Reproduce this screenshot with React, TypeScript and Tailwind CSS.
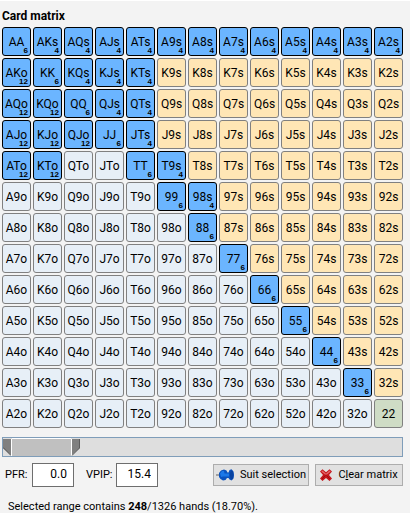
import { useState } from "react";

const RANKS = "AKQJT98765432";

const SELECTED = new Set(
  (
    "AA AKs AQs AJs ATs A9s A8s A7s A6s A5s A4s A3s A2s " +
    "AKo KK KQs KJs KTs AQo KQo QQ QJs QTs AJo KJo QJo JJ JTs " +
    "ATo KTo TT T9s 99 98s 88 77 66 55 44 33"
  ).split(" "),
);

type Kind = "pair" | "suited" | "offsuit";
type Hand = { name: string; kind: Kind };

const COMBOS: Record<Kind, number> = { pair: 6, suited: 4, offsuit: 12 };
const FILL: Record<Kind, string> = {
  pair: "border-[#808080] bg-[#cfdcc5]",
  suited: "border-[#808080] bg-[#ffe6b5]",
  offsuit: "border-[#808080] bg-[#e7eff7]",
};

const HANDS: Hand[] = [];
for (let r = 0; r < 13; r++) {
  for (let c = 0; c < 13; c++) {
    if (r === c) HANDS.push({ name: RANKS[r] + RANKS[r], kind: "pair" });
    else if (c > r) HANDS.push({ name: RANKS[r] + RANKS[c] + "s", kind: "suited" });
    else HANDS.push({ name: RANKS[c] + RANKS[r] + "o", kind: "offsuit" });
  }
}

function Cell({ hand, on, toggle }: { hand: Hand; on: boolean; toggle: () => void }) {
  return (
    <button
      type="button"
      aria-pressed={on}
      onClick={toggle}
      className={`relative flex aspect-square items-center justify-center rounded-[3px] border text-[12px] leading-[10px] ${
        on ? "border-black bg-[#6bb5ff]" : FILL[hand.kind]
      }`}
    >
      {hand.name}
      {on && (
        <span className="absolute right-0.5 bottom-0 font-['Liberation_Sans',sans-serif] text-[8px] leading-[8px] font-bold">
          {COMBOS[hand.kind]}
        </span>
      )}
    </button>
  );
}

function RangeBar() {
  return (
    <div className="relative mt-[9px] h-5 border border-[#7f9db9] bg-[#dedede]">
      <div className="flex h-full w-[77px] bg-[#c0c0c0]">
        <svg className="h-full w-[9px]" viewBox="0 0 9 18" aria-hidden="true">
          <rect width="9" height="18" fill="#dedede" />
          <path d="M0 1H8V17L0 10Z" fill="#808080" />
          <path d="M0 9.500L8 17.500" stroke="#4c4c4c" />
          <path d="M8.500 1V18" stroke="#fff" />
        </svg>
        <div className="flex-1 border-t border-white" />
        <svg className="h-full w-[9px]" viewBox="0 0 9 18" aria-hidden="true">
          <rect width="9" height="18" fill="#dedede" />
          <path d="M1 1H9V10L1 17Z" fill="#808080" />
          <path d="M0.500 1V18" stroke="#fff" />
          <path d="M8.500 1V10L1 17.500" fill="none" stroke="#5c5c5c" />
        </svg>
      </div>
      <input type="range" aria-label="Range start" defaultValue={0} className="absolute inset-0 h-full w-full opacity-0" />
      <input type="range" aria-label="Range end" defaultValue={19} className="absolute inset-0 h-full w-full opacity-0" />
    </div>
  );
}

function PinIcon() {
  return (
    <svg className="h-3 w-[18px]" viewBox="0 0 18 12" aria-hidden="true">
      <path d="M0 6H4" stroke="#777" strokeWidth="1.2" />
      <path d="M3 4L5 1.500L8 .5L10.500 1.500L11.500 3.500H12.500L13.500 1L15.500 .3L17.500 2.500L18 6L17.500 9.500L15.500 11.500L13.500 10.500L12.500 9H11L9.500 11L7 11.500L4.500 10L3 8Z" fill="#0b52bd" />
      <path d="M4 4.500L6 2L8 2L8.500 4.500H13V7.500H7L5 8Z" fill="#1c78e8" />
      <ellipse cx="15.700" cy="6" rx="1.700" ry="4.500" fill="#0842a0" />
    </svg>
  );
}

function CrossIcon() {
  return (
    <svg className="h-3 w-3" viewBox="0 0 12 12" aria-hidden="true">
      <path d="M0 2.500L2.500 .3L6 3.200L9.500 .3L12 2.500L9 6L12 9.500L9.500 12L6 9L2.500 12L0 9.500L3 6Z" fill="#c4161c" />
      <path d="M1.300 2.500L2.500 1.500L6 4.800L9.500 1.500L10.700 2.500L7 5.500H5Z" fill="#e4686b" />
      <path d="M2 10L5.500 6.500M10 10L6.500 6.500" stroke="#9f0d12" />
    </svg>
  );
}

const field = "h-6 w-[42px] border border-[#6e6e6e] bg-white pr-[6px] pb-[3px] text-right text-[12px]";
const action =
  "flex h-[22px] items-center justify-center gap-1.5 border border-[#adadad] bg-[#e1e1e1] whitespace-nowrap";

export default function App() {
  const [selected, setSelected] = useState(SELECTED);
  const toggle = (name: string) => {
    const next = new Set(selected);
    if (!next.delete(name)) next.add(name);
    setSelected(next);
  };
  const count = HANDS.reduce((n, h) => n + (selected.has(h.name) ? COMBOS[h.kind] : 0), 0);
  const percent = ((count / 1326) * 100).toFixed(2);

  return (
    <main className="min-h-screen border-t border-white bg-[#f3f3f3] pr-[7px] pl-0.5 font-['Roboto',sans-serif] text-[11px] leading-3 text-black">
      <h1 className="pt-[9px] pb-[5px] text-[12px] font-bold">Card matrix</h1>
      <div className="grid grid-cols-13 gap-0.5">
        {HANDS.map((h) => (
          <Cell key={h.name} hand={h} on={selected.has(h.name)} toggle={() => toggle(h.name)} />
        ))}
      </div>
      <RangeBar />
      <div className="mt-1.5 flex items-center pl-[3px]">
        <label htmlFor="pfr" className="w-[27px]">PFR:</label>
        <input id="pfr" className={field} defaultValue="0.0" />
        <label htmlFor="vpip" className="ml-3 w-[30px]">VPIP:</label>
        <input id="vpip" className={field} defaultValue="15.4" />
        <div className="ml-auto flex gap-1.5">
          <button type="button" className={`${action} w-24`}>
            <PinIcon />
            Suit selection
          </button>
          <button
            type="button"
            className={`${action} w-[88px]`}
            onClick={() => setSelected(new Set())}
          >
            <CrossIcon />
            <span>C<u>l</u>ear matrix</span>
          </button>
        </div>
      </div>
      <p className="mt-3.5 pl-1.5">
        Selected range contains <b>{count}</b>/1326 hands ({percent}%).
      </p>
    </main>
  );
}
